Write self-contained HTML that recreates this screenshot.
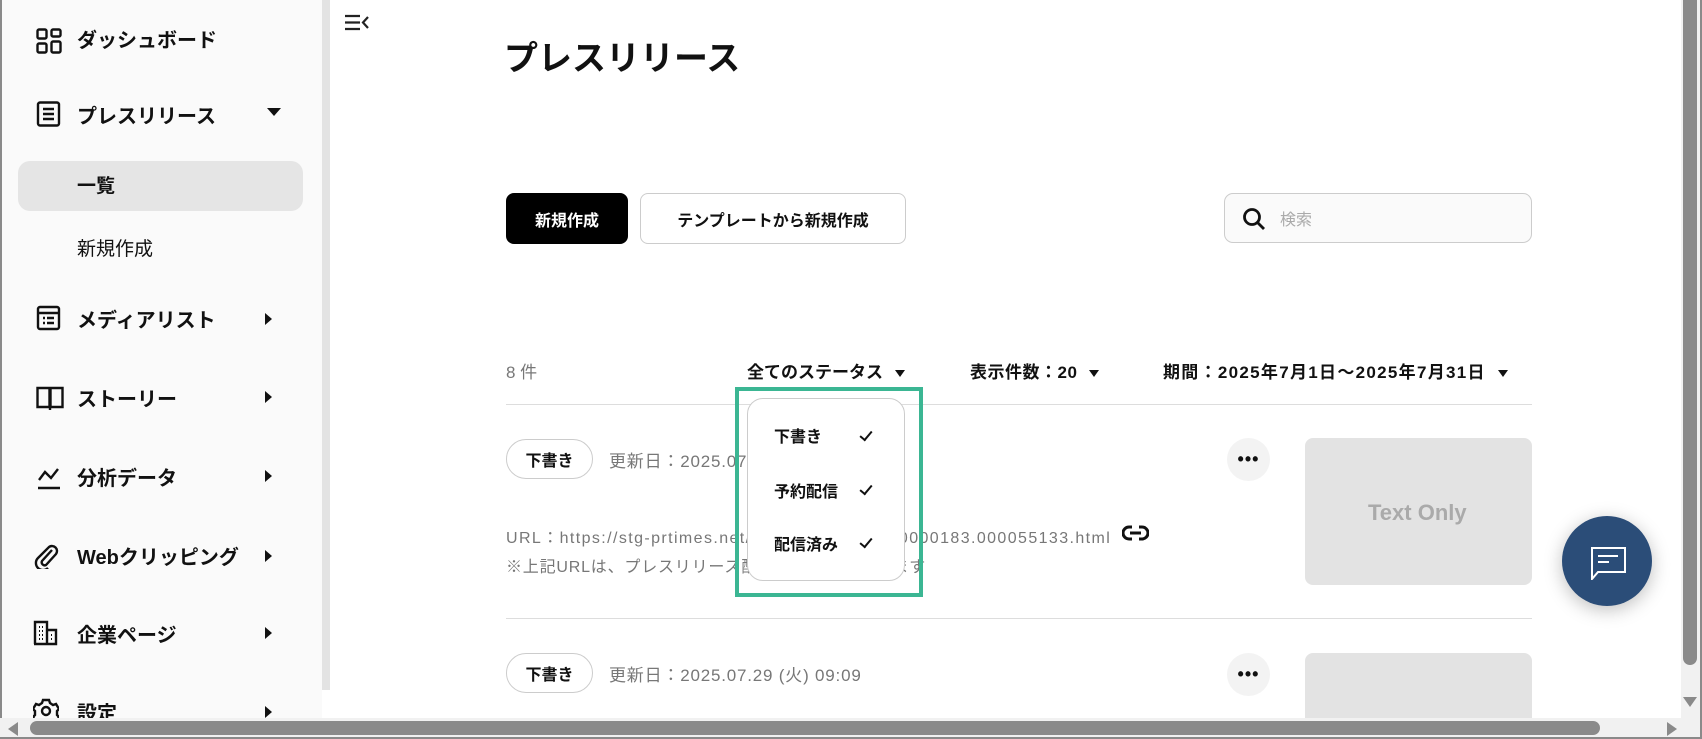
<!DOCTYPE html>
<html><head><meta charset="utf-8"><style>
*{margin:0;padding:0;box-sizing:border-box}
body{width:1702px;height:739px;overflow:hidden;background:#fff;font-family:"Liberation Sans","Noto Sans CJK JP",sans-serif;color:#111;position:relative}
.a{position:absolute;white-space:nowrap}
.side{position:absolute;left:0;top:0;width:322px;height:720px;background:#fafafa;border-left:2px solid #8a8a8a}
.sb{position:absolute;left:322px;top:0;width:8px;height:690px;background:#e3e3e3}
.nav{font-size:20px;font-weight:bold;left:77px}
.ico{position:absolute;left:36px}
.tri-r{position:absolute;width:0;height:0;border-top:6px solid transparent;border-bottom:6px solid transparent;border-left:7px solid #111}
.btn{position:absolute;border-radius:8px;font-size:16px;font-weight:bold;display:flex;align-items:center;justify-content:center}
.flt{font-size:17px;font-weight:bold;top:358px}
.dd{display:inline-block;width:0;height:0;border-left:5px solid transparent;border-right:5px solid transparent;border-top:7px solid #111;margin-left:12px;vertical-align:middle}
.badge{position:absolute;left:506px;width:87px;height:40px;border:1px solid #ccc;border-radius:20px;font-size:16px;font-weight:bold;display:flex;align-items:center;justify-content:center}
.gray{color:#777;font-size:17px}
.dots{position:absolute;left:1227px;width:43px;height:43px;border-radius:50%;background:#f3f3f3;display:flex;align-items:center;justify-content:center;font-weight:bold;font-size:18px;letter-spacing:1px}
.thumb{position:absolute;left:1305px;width:227px;background:#e3e3e3;border-radius:8px}
.line{position:absolute;left:506px;width:1026px;height:1px;background:#ddd}
.chk{position:absolute;left:860px;width:12px;height:7px;border-left:2px solid #111;border-bottom:2px solid #111;transform:rotate(-50deg)}
</style></head><body>
<div class="side"></div>
<div class="sb"></div>
<div class="a" style="left:0;top:0;width:2px;height:739px;background:#8a8a8a"></div>

<svg class="ico" style="top:28px" width="26" height="26" viewBox="0 0 26 26" fill="none" stroke="#111" stroke-width="2.4"><rect x="1.5" y="1.5" width="9" height="9" rx="1.5"/><rect x="15.5" y="1.5" width="9" height="7" rx="1.5"/><rect x="1.5" y="15.5" width="9" height="9" rx="1.5"/><rect x="15.5" y="13.5" width="9" height="11" rx="1.5"/></svg>
<div class="a nav" style="top:24px">ダッシュボード</div>
<svg class="ico" style="top:101px" width="26" height="26" viewBox="0 0 26 26" fill="none" stroke="#111" stroke-width="2.4"><rect x="2" y="1.5" width="21" height="23" rx="2"/><path d="M7 8h11M7 13h11M7 18h11"/></svg>
<div class="a nav" style="top:100px">プレスリリース</div>
<div class="a" style="left:267px;top:108px;border-left:7px solid transparent;border-right:7px solid transparent;border-top:8px solid #111"></div>
<div class="a" style="left:18px;top:161px;width:285px;height:50px;background:#e5e5e5;border-radius:12px"></div>
<div class="a" style="left:77px;top:171px;font-size:19px;font-weight:bold">一覧</div>
<div class="a" style="left:77px;top:234px;font-size:19px">新規作成</div>
<svg class="ico" style="top:305px" width="26" height="26" viewBox="0 0 26 26" fill="none" stroke="#111" stroke-width="2.4"><rect x="2" y="2" width="21" height="22" rx="2"/><path d="M2 8h21M7 13h2M11 13h7M7 18h2M11 18h7"/></svg>
<div class="a nav" style="top:304px">メディアリスト</div>
<div class="tri-r" style="left:265px;top:313px"></div>
<svg class="ico" style="top:385px" width="28" height="26" viewBox="0 0 28 26" fill="none" stroke="#111" stroke-width="2.4"><path d="M1.5 3h12v19h-12zM14.5 3h12v19h-12zM14 22v3"/></svg>
<div class="a nav" style="top:383px">ストーリー</div>
<div class="tri-r" style="left:265px;top:391px"></div>
<svg class="ico" style="top:464px" width="26" height="26" viewBox="0 0 26 26" fill="none" stroke="#111" stroke-width="2.4"><path d="M3 16l6-8 6 6 7-9M2 24h22"/></svg>
<div class="a nav" style="top:462px">分析データ</div>
<div class="tri-r" style="left:265px;top:470px"></div>
<svg class="ico" style="top:541px;left:33px" width="26" height="28" viewBox="0 0 26 28" fill="none" stroke="#111" stroke-width="2.4"><path d="M19 9L9 20a3 3 0 0 0 4 4l10-11a5 5 0 0 0-7-7L5 17a7 7 0 0 0 10 10"/></svg>
<div class="a nav" style="top:541px">Webクリッピング</div>
<div class="tri-r" style="left:265px;top:550px"></div>
<svg class="ico" style="top:620px;left:33px" width="26" height="26" viewBox="0 0 26 26" fill="none" stroke="#111" stroke-width="2.4"><path d="M2 24V2h12v22M14 10h9v14H1"/><path d="M6 7h1M9 7h1M6 11h1M9 11h1M6 15h1M9 15h1M6 19h1M9 19h1M18 15h1M18 19h1" stroke-width="2"/></svg>
<div class="a nav" style="top:619px">企業ページ</div>
<div class="tri-r" style="left:265px;top:627px"></div>
<svg class="ico" style="top:698px;left:33px" width="26" height="26" viewBox="0 0 26 26" fill="none" stroke="#111" stroke-width="2.4"><circle cx="13" cy="13" r="4"/><path d="M10 2h6l1 3 3 2 3-1 3 5-2 2v4l2 2-3 5-3-1-3 2-1 3h-6l-1-3-3-2-3 1-3-5 2-2v-4l-2-2 3-5 3 1 3-2z"/></svg>
<div class="a nav" style="top:697px">設定</div>
<div class="tri-r" style="left:265px;top:706px"></div>
<div class="a" style="left:0;top:720px;width:330px;height:19px;background:#fafafa"></div>

<svg class="a" style="left:345px;top:14px" width="25" height="17" viewBox="0 0 25 17" fill="none" stroke="#222" stroke-width="2.2"><path d="M0 2h15M0 8.5h15M0 15h15M23 3l-5 5.5 5 5.5"/></svg>

<div class="a" style="left:504px;top:31px;font-size:34px;font-weight:bold">プレスリリース</div>

<div class="btn" style="left:506px;top:193px;width:122px;height:51px;background:#000;color:#fff">新規作成</div>
<div class="btn" style="left:640px;top:193px;width:266px;height:51px;border:1px solid #ccc;background:#fff">テンプレートから新規作成</div>
<div class="a" style="left:1224px;top:193px;width:308px;height:50px;border:1px solid #ccc;border-radius:9px;background:#fafafa"></div>
<svg class="a" style="left:1242px;top:207px" width="24" height="24" viewBox="0 0 24 24" fill="none" stroke="#111" stroke-width="2.8"><circle cx="10" cy="10" r="7.5"/><path d="M15.5 15.5L22 22"/></svg>
<div class="a" style="left:1280px;top:206px;font-size:16px;color:#aaa">検索</div>

<div class="a gray" style="left:506px;top:358px;font-size:17px">8 件</div>
<div class="a flt" style="left:747px">全てのステータス<span class="dd"></span></div>
<div class="a flt" style="left:970px;letter-spacing:0.5px">表示件数：20<span class="dd"></span></div>
<div class="a flt" style="left:1163px;letter-spacing:1.3px">期間：2025年7月1日〜2025年7月31日<span class="dd"></span></div>
<div class="line" style="top:404px"></div>

<div class="badge" style="top:439px">下書き</div>
<div class="a gray" style="left:609px;top:447px;letter-spacing:0.8px">更新日：2025.07.29 (火) 09:09</div>
<div class="a gray" style="left:506px;top:524px;font-size:16px;letter-spacing:1.4px">URL：https://stg-prtimes.net/main/html/rd/p/000000183.000055133.html</div>
<svg class="a" style="left:1122px;top:525px" width="27" height="16" viewBox="0 0 27 16" fill="none" stroke="#111" stroke-width="3"><path d="M10 2H7a6 6 0 0 0 0 12h3M17 2h3a6 6 0 0 1 0 12h-3M8 8h11"/></svg>
<div class="a gray" style="left:506px;top:553px;font-size:16px;letter-spacing:0.8px">※上記URLは、プレスリリース配信後に有効になります</div>
<div class="dots" style="top:438px">•••</div>
<div class="thumb" style="top:438px;height:147px"></div>
<div class="a" style="left:1368px;top:500px;font-size:22px;font-weight:bold;color:#aaa">Text Only</div>

<div class="line" style="top:618px"></div>
<div class="badge" style="top:653px">下書き</div>
<div class="a gray" style="left:609px;top:661px;letter-spacing:0.8px">更新日：2025.07.29 (火) 09:09</div>
<div class="dots" style="top:653px">•••</div>
<div class="thumb" style="top:653px;height:70px;border-radius:8px 8px 0 0"></div>

<div class="a" style="left:735px;top:387px;width:188px;height:210px;border:4px solid #3bb693"></div>
<div class="a" style="left:747px;top:398px;width:158px;height:183px;border:1px solid #ccc;border-radius:16px;background:#fff"></div>
<div class="a" style="left:774px;top:423px;font-size:16px;font-weight:bold">下書き</div>
<div class="chk" style="top:431px"></div>
<div class="a" style="left:774px;top:478px;font-size:16px;font-weight:bold">予約配信</div>
<div class="chk" style="top:485px"></div>
<div class="a" style="left:774px;top:531px;font-size:16px;font-weight:bold">配信済み</div>
<div class="chk" style="top:538px"></div>

<div class="a" style="left:1562px;top:516px;width:90px;height:90px;border-radius:50%;background:#2b4d78;box-shadow:0 4px 18px rgba(0,0,0,.25)"></div>
<svg class="a" style="left:1588px;top:546px" width="40" height="34" viewBox="0 0 40 34" fill="none" stroke="#fff" stroke-width="2"><path d="M3 2h34v24H10l-6 7V2z"/><path d="M10 10h20M10 16h11"/></svg>

<div class="a" style="left:1681px;top:0;width:21px;height:720px;background:#f1f1f1"></div>
<div class="a" style="left:1683px;top:0;width:14px;height:665px;background:#8a8a8a;border-radius:0 0 7px 7px"></div>
<div class="a" style="left:1683px;top:697px;border-left:7px solid transparent;border-right:7px solid transparent;border-top:10px solid #8a8a8a"></div>
<div class="a" style="left:0;top:718px;width:1702px;height:21px;background:#f1f1f1;border-bottom:2px solid #8a8a8a"></div>
<div class="a" style="left:8px;top:722px;border-top:7px solid transparent;border-bottom:7px solid transparent;border-right:10px solid #8a8a8a"></div>
<div class="a" style="left:30px;top:721px;width:1570px;height:14px;background:#8a8a8a;border-radius:7px"></div>
<div class="a" style="left:1667px;top:722px;border-top:7px solid transparent;border-bottom:7px solid transparent;border-left:10px solid #8a8a8a"></div>
<div class="a" style="left:1700px;top:0;width:2px;height:739px;background:#8a8a8a"></div>
</body></html>
